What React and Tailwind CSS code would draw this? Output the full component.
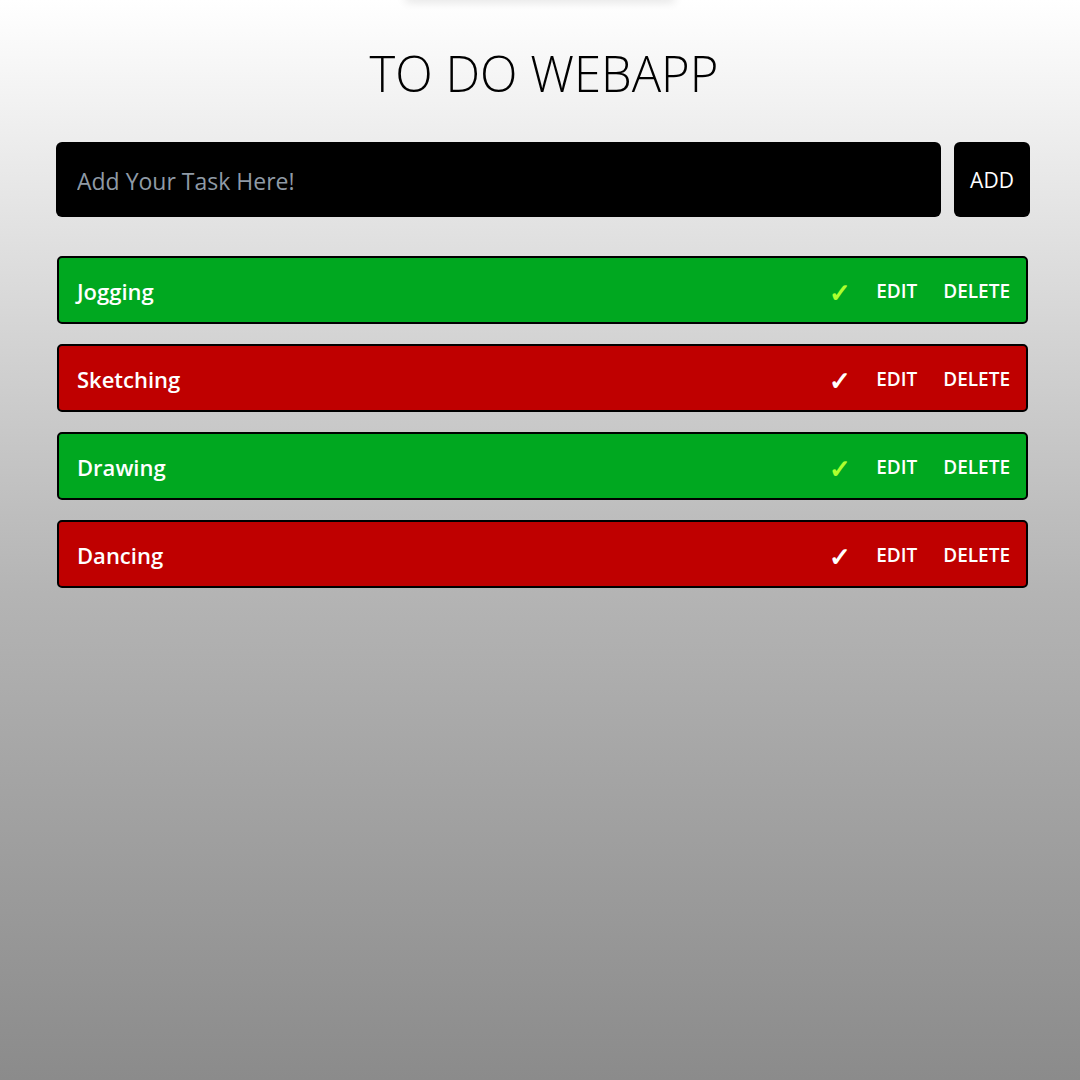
import React, { useState } from 'react';

const initialTasks = [
  { id: 1, name: 'Jogging', done: true },
  { id: 2, name: 'Sketching', done: false },
  { id: 3, name: 'Drawing', done: true },
  { id: 4, name: 'Dancing', done: false },
];

const TodoApp = () => {
  const [tasks, setTasks] = useState(initialTasks);
  const [text, setText] = useState('');

  const addTask = () => {
    if (!text.trim()) return;
    setTasks([...tasks, { id: Date.now(), name: text.trim(), done: false }]);
    setText('');
  };

  const toggleTask = (id) => {
    setTasks(tasks.map((t) => (t.id === id ? { ...t, done: !t.done } : t)));
  };

  const deleteTask = (id) => {
    setTasks(tasks.filter((t) => t.id !== id));
  };

  return (
    <div
      className="min-h-screen bg-gradient-to-b from-white via-[#b4b4b4] via-55% to-[#8b8b8b] overflow-hidden"
      style={{ fontFamily: '"Open Sans", "Noto Sans", sans-serif' }}
    >
      <div className="mx-auto w-[270px] h-[8px] -mt-[8px] rounded-full shadow-[0_2px_10px_rgba(0,0,0,0.12)]"></div>

      <h1 className="text-center text-[49px] font-light text-black mt-[38px] leading-[70px] pl-[8px]">TO DO WEBAPP</h1>

      <div className="flex gap-[13px] pl-[56px] pr-[50px] mt-[34px]">
        <input
          type="text"
          value={text}
          onChange={(e) => setText(e.target.value)}
          placeholder="Add Your Task Here!"
          className="flex-1 h-[75px] bg-black rounded-[6px] px-[21px] pt-[2px] text-[23px] text-white placeholder:text-[#8f9aa6] outline-none"
        />
        <button
          onClick={addTask}
          className="w-[76px] h-[75px] bg-black rounded-[6px] pt-[3px] text-white text-[21px]"
        >
          ADD
        </button>
      </div>

      <ul className="flex flex-col gap-[20px] ml-[57px] mr-[52px] mt-[39px]">
        {tasks.map((task) => (
          <li
            key={task.id}
            className={`flex items-center h-[68px] border-2 border-black rounded-[5px] pl-[18px] pr-[16px] pt-[3px] ${task.done ? 'bg-[#00a820]' : 'bg-[#bf0000]'}`}
          >
            <span className="flex-1 text-white text-[22px] font-semibold">{task.name}</span>
            <button
              onClick={() => toggleTask(task.id)}
              className={`text-[26px] font-bold leading-none mr-[25px] ${task.done ? 'text-[#adff2f]' : 'text-white'}`}
            >
              ✓
            </button>
            <button className="text-white text-[19px] font-semibold mr-[26px]">EDIT</button>
            <button onClick={() => deleteTask(task.id)} className="text-white text-[19px] font-semibold">
              DELETE
            </button>
          </li>
        ))}
      </ul>
    </div>
  );
};

export default TodoApp;
